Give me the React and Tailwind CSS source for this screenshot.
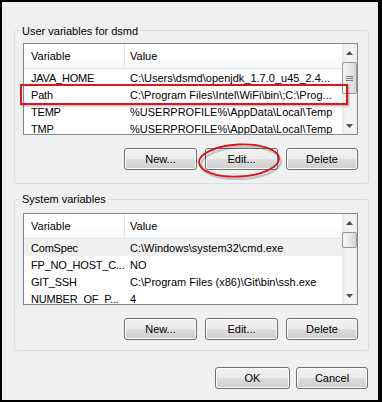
const userRows = [
  ['JAVA_HOME', 'C:\\Users\\dsmd\\openjdk_1.7.0_u45_2.4...'],
  ['Path', 'C:\\Program Files\\Intel\\WiFi\\bin\\;C:\\Prog...'],
  ['TEMP', '%USERPROFILE%\\AppData\\Local\\Temp'],
  ['TMP', '%USERPROFILE%\\AppData\\Local\\Temp'],
];

const systemRows = [
  ['ComSpec', 'C:\\Windows\\system32\\cmd.exe'],
  ['FP_NO_HOST_C...', 'NO'],
  ['GIT_SSH', 'C:\\Program Files (x86)\\Git\\bin\\ssh.exe'],
  ['NUMBER_OF_P...', '4'],
];

function WinButton({ children, className = '' }) {
  return (
    <button
      className={`flex h-[22px] items-center justify-center rounded-[3px] border border-[#707070] bg-[linear-gradient(#f2f2f2_0%,#ebebeb_50%,#dddddd_50%,#cfcfcf_100%)] text-black shadow-[inset_0_0_0_1px_#fcfcfc] ${className}`}
    >
      {children}
    </button>
  );
}

function Arrow({ down }) {
  return (
    <svg width="7" height="4" viewBox="0 0 7 4">
      <polygon points={down ? '0,0 7,0 3.5,4' : '0,4 7,4 3.5,0'} fill="#505050" />
    </svg>
  );
}

function Scrollbar({ thumbHeight, grip }) {
  return (
    <div className="flex w-[15px] flex-col bg-[linear-gradient(to_right,#e6e6e6,#f3f3f3_25%,#f3f3f3_75%,#ececec)]">
      <div className="flex h-[17px] items-center justify-center">
        <Arrow />
      </div>
      <div className="flex-1">
        <div
          className={`mt-[1px] flex flex-col items-center justify-center gap-[1px] rounded-[2px] border border-[#979797] bg-[linear-gradient(to_right,#f4f4f4,#e8e8e8_50%,#d6d6d6)] ${thumbHeight}`}
        >
          {grip && (
            <>
              <div className="h-[1px] w-[7px] bg-[#7a7a7a]" />
              <div className="h-[1px] w-[7px] bg-[#7a7a7a]" />
              <div className="h-[1px] w-[7px] bg-[#7a7a7a]" />
            </>
          )}
        </div>
      </div>
      <div className="flex h-[17px] items-center justify-center">
        <Arrow down />
      </div>
    </div>
  );
}

function VarList({ rows, selected, thumbHeight, grip }) {
  return (
    <div className="flex h-[92px] w-[335px] border border-[#828790] bg-white">
      <div className="flex-1 overflow-hidden">
        <div className="flex h-[25px] border-b border-[#e5e5e5] bg-[linear-gradient(#ffffff,#ffffff_50%,#f7f8f9)]">
          <div className="flex w-[101px] items-center border-r border-[#e3e8ee] pl-[7px]">Variable</div>
          <div className="flex items-center pl-[5px]">Value</div>
        </div>
        {rows.map(([name, value], i) => (
          <div
            key={name}
            className={`flex h-[17px] items-center whitespace-nowrap ${i === selected ? 'bg-[#f0f0f0]' : ''}`}
          >
            <div className="w-[101px] shrink-0 pl-[7px] tracking-[-0.2px]">{name}</div>
            <div className="flex-1 overflow-hidden pl-[5px]">{value}</div>
          </div>
        ))}
      </div>
      <Scrollbar thumbHeight={thumbHeight} grip={grip} />
    </div>
  );
}

function Buttons() {
  return (
    <div className="mt-[13px] flex justify-end gap-[8px]">
      <WinButton className="w-[73px]">New...</WinButton>
      <WinButton className="w-[73px]">Edit...</WinButton>
      <WinButton className="w-[72px]">Delete</WinButton>
    </div>
  );
}

export default function App() {
  return (
    <div className="h-[402px] w-[382px] border-b-2 border-l-2 border-r-4 border-t-2 border-black bg-[#f0f0f0] font-['Liberation_Sans',Arial,sans-serif] text-[11px] leading-[16px] text-black">
      <div className="relative ml-[12px] mt-[28px] h-[154px] w-[355px] rounded-[3px] border border-[#d5dfe5] pl-[8px] pr-[10px] pt-[12px]">
        <div className="absolute -top-[8px] left-[5px] bg-[#f0f0f0] px-[2px]">User variables for dsmd</div>
        <VarList rows={userRows} thumbHeight="h-[32px]" grip />
        <Buttons />
        <div className="absolute left-[5px] top-[53px] h-[21px] w-[328px] border-2 border-[#e0141e] shadow-[1px_1px_2px_rgba(0,0,0,0.35)]" />
        <svg className="absolute left-[182px] top-[111px]" width="86" height="38" viewBox="0 0 86 38">
          <ellipse cx="43" cy="19.5" rx="40" ry="16" fill="none" stroke="rgba(0,0,0,0.18)" strokeWidth="2.5" transform="rotate(-3 43 19) translate(1 1.5)" />
          <ellipse cx="42" cy="18.5" rx="40" ry="16" fill="none" stroke="#d8131b" strokeWidth="1.8" transform="rotate(-3 42 18.5)" />
        </svg>
      </div>

      <div className="relative ml-[12px] mt-[15px] h-[152px] w-[355px] rounded-[3px] border border-[#d5dfe5] pl-[8px] pr-[10px] pt-[13px]">
        <div className="absolute -top-[9px] left-[5px] bg-[#f0f0f0] px-[2px]">System variables</div>
        <VarList rows={systemRows} selected={0} thumbHeight="h-[16px]" />
        <Buttons />
      </div>

      <div className="mt-[16px] flex justify-end gap-[6px] pr-[10px]">
        <WinButton className="w-[75px]">OK</WinButton>
        <WinButton className="w-[72px]">Cancel</WinButton>
      </div>
    </div>
  );
}
